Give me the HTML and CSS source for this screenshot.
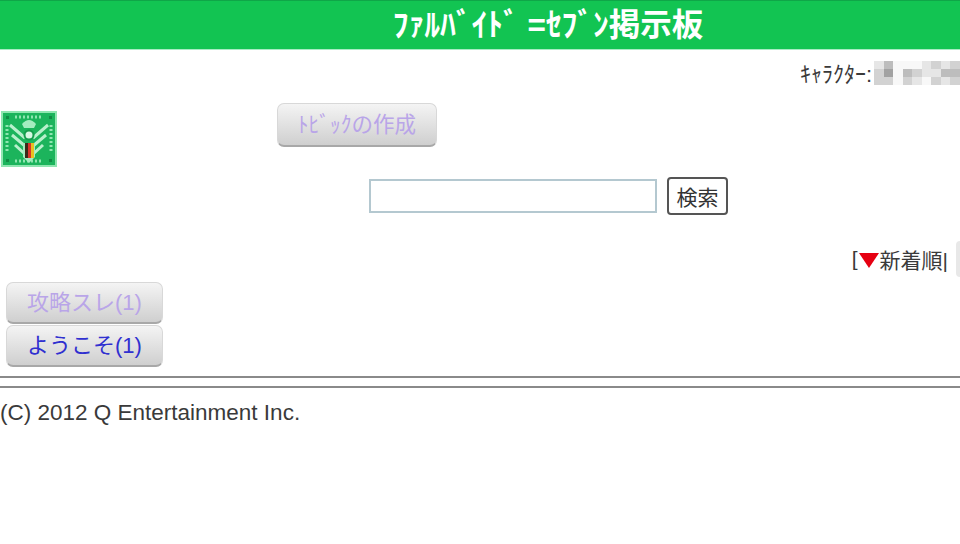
FILE: index.html
```html
<!DOCTYPE html>
<html lang="ja">
<head>
    <meta charset="UTF-8">
    <meta name="viewport" content="width=device-width, initial-scale=1.0">
    <title>ファルバイド=セブン掲示板</title>
    <link rel="stylesheet" href="styles.css">
</head>
<body>

<h1 class="title">ﾌｧﾙﾊﾞｲﾄﾞ =ｾﾌﾞﾝ掲示板</h1>

<div class="character">
    <span>ｷｬﾗｸﾀｰ:</span>
    <!-- name is pixelated in the screenshot -->
    <div class="mosaic">
        <i class="m1"></i><i class="m3"></i><i class="m0"></i><i class="m0"></i><i class="m0"></i><i class="m1"></i><i class="m2"></i><i class="m1"></i><i class="m2"></i>
        <i class="m2"></i><i class="m4"></i><i class="m0"></i><i class="m3"></i><i class="m2"></i><i class="m1"></i><i class="m1"></i><i class="m3"></i><i class="m3"></i>
        <i class="m2"></i><i class="m2"></i><i class="m0"></i><i class="m2"></i><i class="m1"></i><i class="m0"></i><i class="m2"></i><i class="m1"></i><i class="m2"></i>
    </div>
</div>

<div class="topic-row">
    <svg class="emblem" viewBox="0 0 56 56" aria-label="emblem">
        <rect width="56" height="56" fill="#1cb45c"/>
        <rect x="1" y="1" width="54" height="54" fill="none" stroke="#8fe6b0" stroke-width="2"/>
        <path d="M6 14v28M50 14v28M14 50h28M14 6h28" stroke="#8fe6b0" stroke-width="3" stroke-dasharray="2 2" fill="none"/>
        <path d="M9 14l15 13M47 14L32 27M11 24l13 11M45 24L32 35M14 34l11 10M42 34L31 44" stroke="#b8f0cc" stroke-width="3" fill="none"/>
        <path d="M21 13q7-8 14 0l-2 4H23z" fill="#a5ecc0"/>
        <circle cx="28" cy="24" r="4.500" fill="#d6f7e2" stroke="#149c4b" stroke-width="2"/>
        <path d="M22 32h12v14l-6 6-6-6z" fill="#a5ecc0"/>
        <rect x="24" y="32" width="3" height="15" fill="#3a2a18"/>
        <rect x="27" y="32" width="3" height="15" fill="#d8342a"/>
        <rect x="30" y="32" width="3" height="15" fill="#e8c020"/>
        <path d="M5 5h3v3H5zM48 5h3v3h-3zM5 48h3v3H5zM48 48h3v3h-3z" fill="#128a45"/>
    </svg>
    <a class="btn btn-topic visited" href="#">ﾄﾋﾞｯｸの作成</a>
</div>

<form class="search">
    <input class="search-box" type="text">
    <button class="search-btn" type="button">検索</button>
</form>

<div class="sort">
    <span class="bracket">[</span><span class="arrow"></span><span>新着順|</span>
    <span class="sort-edge"></span>
</div>

<div class="threads">
    <a class="btn btn-thread visited" href="#">攻略スレ(1)</a>
    <a class="btn btn-thread" href="#">ようこそ(1)</a>
</div>

<hr class="rule">
<hr class="rule">

<p class="copy">(C) 2012 Q Entertainment Inc.</p>

</body>
</html>
```

FILE: styles.css
```css
body {
    margin: 0;
    overflow: hidden;
    background: #fff;
    color: #3a3a3a;
    font-family: "Liberation Sans", "Noto Sans CJK JP", sans-serif;
}
.title {
    margin: 0;
    height: 50px;
    padding-left: 136px;
    border-top: 1px solid #0fa648;
    border-bottom: 1px solid #a8ecc4;
    box-sizing: border-box;
    background: #12c452;
    color: #fff;
    font-size: 31.500px;
    font-weight: bold;
    line-height: 49px;
    text-align: center;
}
.character {
    display: flex;
    justify-content: flex-end;
    align-items: center;
    height: 48px;
    padding-bottom: 5px;
    box-sizing: border-box;
    font-size: 22px;
}
.mosaic {
    display: grid;
    grid-template-columns: repeat(9, 9.500px);
    grid-auto-rows: 8px;
    width: 86px;
    margin: 2px 0 0 2px;
}
.mosaic i { display: block; }
.m0 { background: #f8f8f8; }
.m1 { background: #e6e6e6; }
.m2 { background: #d2d2d2; }
.m3 { background: #bdbdbd; }
.m4 { background: #a2a2a2; }
.topic-row {
    display: flex;
    align-items: flex-start;
    height: 74px;
    margin-top: 5px;
}
.emblem {
    width: 56px;
    height: 56px;
    margin: 8px 0 0 1px;
    filter: blur(0.6px);
}
.btn {
    display: block;
    box-sizing: border-box;
    border: 1px solid #d8d8d8;
    border-bottom: 2px solid #a8a8a8;
    border-radius: 7px;
    background: linear-gradient(#f4f4f4, #cfcfcf);
    text-align: center;
    text-decoration: none;
    color: #3030d0;
}
.visited { color: #b9a5e8; }
.btn-topic {
    width: 160px;
    height: 44px;
    margin-left: 220px;
    font-size: 21.500px;
    line-height: 42px;
}
.search {
    display: flex;
    align-items: center;
    height: 38px;
    margin: 0 0 0 369px;
}
.search-box {
    width: 288px;
    height: 34px;
    box-sizing: border-box;
    border: 2px solid #b4c8d0;
    background: #fff;
    padding: 0;
}
.search-btn {
    width: 61px;
    height: 38px;
    margin-left: 10px;
    padding: 0;
    border: 2px solid #555;
    border-radius: 4px;
    background: #fff;
    color: #333;
    font-family: inherit;
    font-size: 21px;
}
.sort {
    display: flex;
    justify-content: flex-end;
    align-items: center;
    height: 32px;
    margin-top: 28px;
    padding-right: 12px;
    font-size: 21px;
    position: relative;
}
.bracket { margin-right: 1px; }
.arrow {
    width: 0;
    height: 0;
    margin: 2px 1px 0 0;
    border-left: 10px solid transparent;
    border-right: 10px solid transparent;
    border-top: 15px solid #e60012;
}
.sort-edge {
    position: absolute;
    top: -2px;
    right: 0;
    width: 4px;
    height: 36px;
    background: #e8e8e8;
    border-radius: 4px 0 0 4px;
}
.threads {
    display: flex;
    flex-direction: column;
    gap: 1px;
    margin: 7px 0 0 6px;
}
.btn-thread {
    width: 157px;
    height: 42px;
    font-size: 22px;
    line-height: 40px;
}
.rule {
    height: 2px;
    margin: 9px 0 0;
    border: 0;
    background: #8a8a8a;
}
.rule + .rule { margin-top: 8px; }
.copy {
    margin: 13px 0 0;
    font-size: 22.500px;
    line-height: 24px;
}
```
